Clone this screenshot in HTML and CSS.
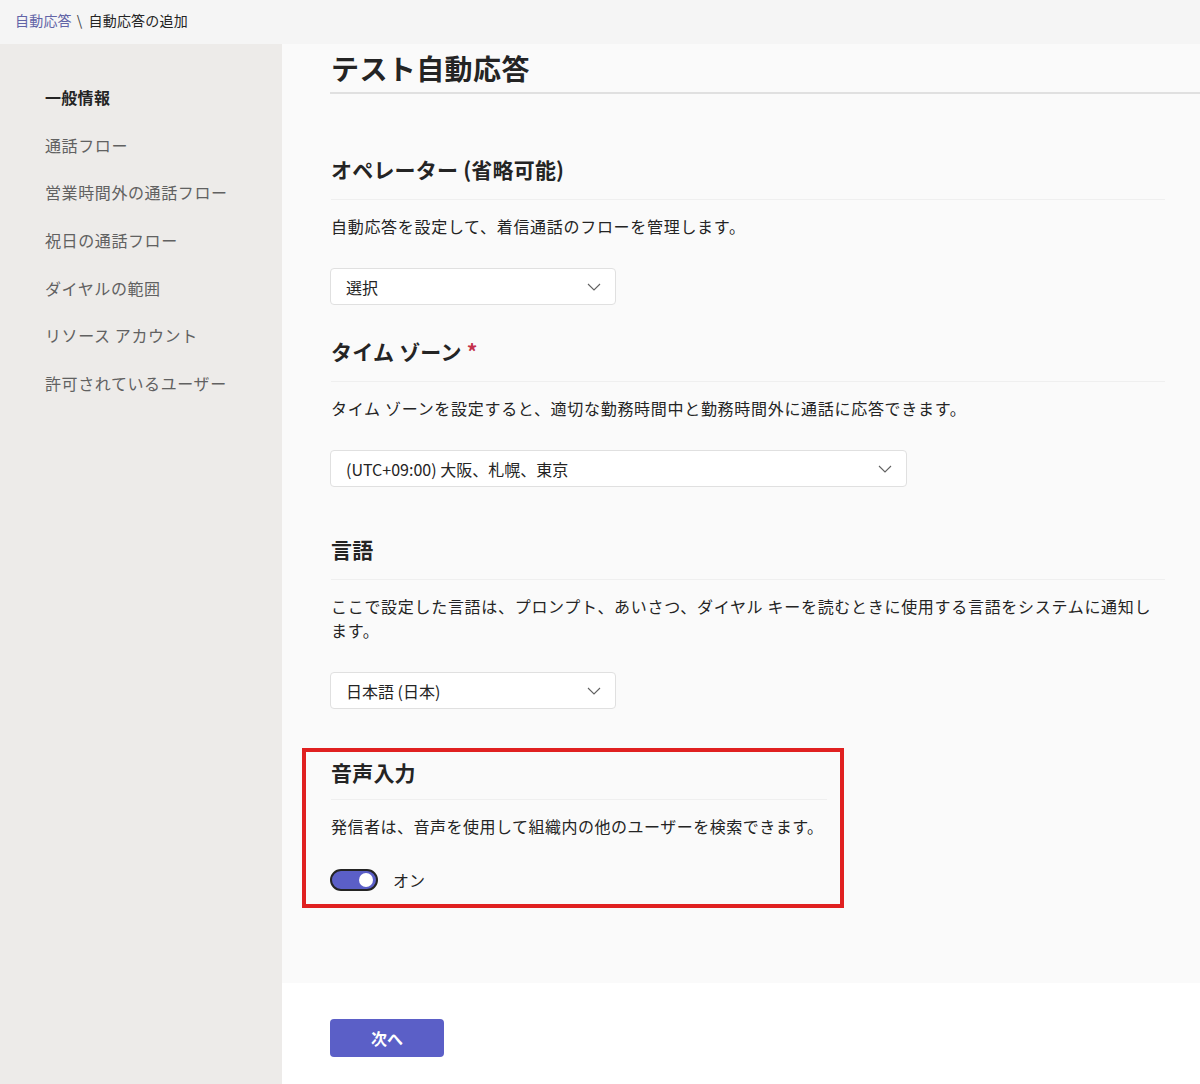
FILE: index.html
```html
<!DOCTYPE html>
<html lang="ja">
<head>
<meta charset="utf-8">
<title>自動応答の追加</title>
<link rel="stylesheet" href="styles.css">
</head>
<body>
<div class="topbar">
  <a class="crumb-link" href="#">自動応答</a><span class="crumb-sep">\</span><span class="crumb-current">自動応答の追加</span>
</div>
<div class="layout">
  <nav class="sidebar">
    <div class="nav-item active">一般情報</div>
    <div class="nav-item">通話フロー</div>
    <div class="nav-item">営業時間外の通話フロー</div>
    <div class="nav-item">祝日の通話フロー</div>
    <div class="nav-item">ダイヤルの範囲</div>
    <div class="nav-item">リソース アカウント</div>
    <div class="nav-item">許可されているユーザー</div>
  </nav>
  <div class="main">
    <div class="content">
      <h1 class="page-title">テスト自動応答</h1>

      <section class="section first">
        <h2 class="sec-title">オペレーター (省略可能)</h2>
        <p class="sec-desc">自動応答を設定して、着信通話のフローを管理します。</p>
        <div class="select narrow"><span>選択</span><svg class="chev" width="14" height="8" viewBox="0 0 14 8"><path d="M1 1 L7 7 L13 1" fill="none" stroke="#616161" stroke-width="1.1"/></svg></div>
      </section>

      <section class="section">
        <h2 class="sec-title">タイム ゾーン <span class="req">*</span></h2>
        <p class="sec-desc">タイム ゾーンを設定すると、適切な勤務時間中と勤務時間外に通話に応答できます。</p>
        <div class="select wide"><span>(UTC+09:00) 大阪、札幌、東京</span><svg class="chev" width="14" height="8" viewBox="0 0 14 8"><path d="M1 1 L7 7 L13 1" fill="none" stroke="#616161" stroke-width="1.1"/></svg></div>
      </section>

      <section class="section lang">
        <h2 class="sec-title">言語</h2>
        <p class="sec-desc">ここで設定した言語は、プロンプト、あいさつ、ダイヤル キーを読むときに使用する言語をシステムに通知し<br>ます。</p>
        <div class="select narrow"><span>日本語 (日本)</span><svg class="chev" width="14" height="8" viewBox="0 0 14 8"><path d="M1 1 L7 7 L13 1" fill="none" stroke="#616161" stroke-width="1.1"/></svg></div>
      </section>

      <section class="section voice">
        <h2 class="sec-title">音声入力</h2>
        <p class="sec-desc">発信者は、音声を使用して組織内の他のユーザーを検索できます。</p>
        <div class="toggle-row">
          <span class="toggle"><span class="knob"></span></span>
          <span class="toggle-label">オン</span>
        </div>
      </section>
    </div>
    <div class="footer">
      <button class="btn-primary">次へ</button>
    </div>
  </div>
</div>
</body>
</html>
```
FILE: styles.css
```css
* { box-sizing: border-box; }
html, body { margin: 0; padding: 0; }
body {
  width: 1200px;
  height: 1084px;
  overflow: hidden;
  font-family: "Noto Sans CJK JP", "Noto Sans", sans-serif;
  color: #242424;
  background: #f5f5f5;
}
.topbar {
  height: 44px;
  padding-left: 15px;
  display: flex;
  align-items: center;
  font-size: 14px;
  line-height: 20px;
  background: #f5f5f5;
  padding-bottom: 5px;
  letter-spacing: 0.2px;
}
.crumb-link { color: #6264a7; text-decoration: none; }
.crumb-sep { color: #424242; margin: 0 6px 0 5px; }
.crumb-current { color: #242424; }

.layout {
  display: flex;
  height: 1040px;
}
.sidebar {
  width: 282px;
  flex: none;
  background: #edebe9;
  padding-top: 29px;
  padding-left: 45px;
}
.nav-item {
  font-size: 16px;
  letter-spacing: 0.6px;
  line-height: 24px;
  padding: 11.85px 0;
  color: #616161;
}
.nav-item.active {
  font-weight: 700;
  color: #242424;
  letter-spacing: 0.3px;
}

.main {
  flex: 1;
  display: flex;
  flex-direction: column;
}
.content {
  background: #fafafa;
  height: 939px;
  padding-top: 4px;
  padding-left: 48px;
}
.page-title {
  margin: 0;
  font-size: 28px;
  font-weight: 700;
  line-height: 40px;
  padding-left: 1px;
  padding-bottom: 4px;
  border-bottom: 2px solid #e0e0e0;
  letter-spacing: 0.4px;
}
.section {
  margin-right: 35px;
  padding-left: 1px;
}
.section.first { margin-top: 63px; }
.section + .section { margin-top: 34px; }
.section.lang { margin-top: 50px; }
.sec-title {
  margin: 0;
  font-size: 21px;
  font-weight: 700;
  line-height: 25px;
  letter-spacing: 0.2px;
  padding-bottom: 17px;
  border-bottom: 1px solid #efefef;
}
.req { color: #c4314b; }
.sec-desc {
  margin: 14px 0 0 0;
  font-size: 16px;
  line-height: 24px;
  letter-spacing: 0.7px;
  color: #242424;
}
.select {
  margin-top: 30px;
  margin-left: -1px;
  height: 37px;
  background: #ffffff;
  border: 1px solid #e0e0e0;
  border-radius: 4px;
  display: flex;
  align-items: center;
  justify-content: space-between;
  padding: 0 14px 0 15px;
  font-size: 16px;
  color: #242424;
}
.select.narrow { width: 286px; }
.select.wide { width: 577px; }
.chev { flex: none; }

.section.voice {
  margin-top: 39px;
  margin-left: -28px;
  width: 542px;
  border: 4px solid #e02020;
  padding: 8px 13px 13px 25px;
}
.voice .sec-title { padding-bottom: 14px; }
.voice .sec-desc {
  margin-top: 14px;
  white-space: nowrap;
  letter-spacing: 0.5px;
}
.toggle-row {
  margin-top: 31px;
  display: flex;
  align-items: center;
  height: 22px;
  margin-left: -1px;
}
.toggle {
  width: 48px;
  height: 22px;
  border-radius: 11px;
  background: #5b5fc7;
  border: 2px solid #242424;
  display: flex;
  align-items: center;
  justify-content: flex-end;
  padding-right: 3px;
}
.knob {
  width: 14px;
  height: 14px;
  border-radius: 50%;
  background: #ffffff;
}
.toggle-label {
  margin-left: 15px;
  font-size: 16px;
  line-height: 22px;
  color: #242424;
}

.footer {
  flex: 1;
  background: #ffffff;
  padding-top: 36px;
  padding-left: 48px;
}
.btn-primary {
  width: 114px;
  height: 38px;
  border: none;
  border-radius: 4px;
  background: #5b5fc7;
  color: #ffffff;
  font-family: inherit;
  font-size: 16px;
  font-weight: 700;
  cursor: pointer;
}
```
